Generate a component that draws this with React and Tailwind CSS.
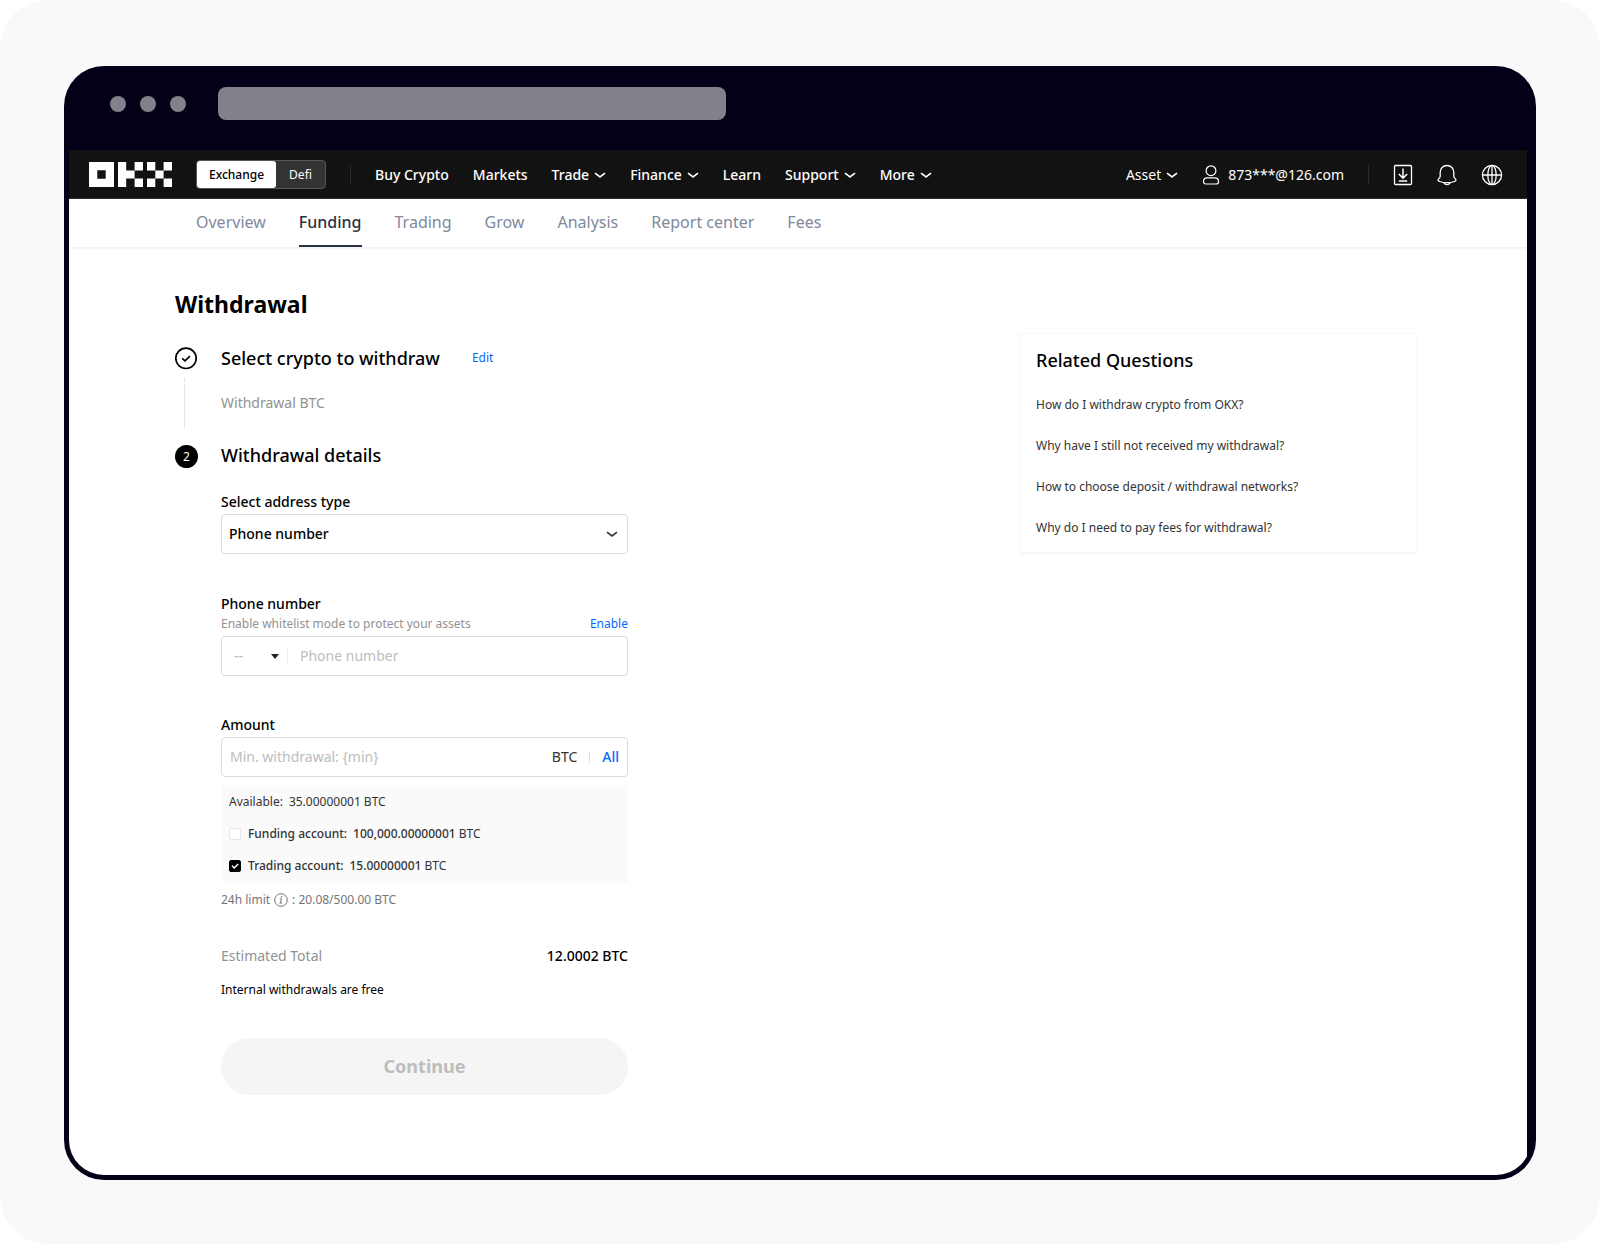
import { useState } from "react";

const navLinks = [
  { label: "Buy Crypto" },
  { label: "Markets" },
  { label: "Trade", menu: true },
  { label: "Finance", menu: true },
  { label: "Learn" },
  { label: "Support", menu: true },
  { label: "More", menu: true },
];

const tabs = ["Overview", "Funding", "Trading", "Grow", "Analysis", "Report center", "Fees"];

const questions = [
  "How do I withdraw crypto from OKX?",
  "Why have I still not received my withdrawal?",
  "How to choose deposit / withdrawal networks?",
  "Why do I need to pay fees for withdrawal?",
];

function Logo() {
  return (
    <svg width="83" height="25" viewBox="0 0 83 25" fill="white">
      <path fillRule="evenodd" d="M0 0h25v25H0zM8.3 8.3v8.4h8.4V8.3z" />
      <path d="M29 0h8.2v8.4h8.4v8.2h-8.4V25H29zM45.6 0H54v8.4h-8.4zM45.6 16.6H54V25h-8.4z" />
      <path d="M58 0h8.3v8.4H58zM74.6 0H83v8.4h-8.4zM66.3 8.4h8.3v8.2h-8.3zM58 16.6h8.3V25H58zM74.6 16.6H83V25h-8.4z" />
    </svg>
  );
}

function Chevron({ className }) {
  return (
    <svg className={className} width="12" height="8" viewBox="0 0 12 8" fill="none" stroke="currentColor" strokeWidth="1.6">
      <path d="M1 2.2 6 6l5-3.8" />
    </svg>
  );
}

function UserIcon() {
  return (
    <svg width="18" height="20" viewBox="0 0 18 20" fill="none" stroke="currentColor" strokeWidth="1.2">
      <circle cx="9" cy="5.7" r="4.9" />
      <path d="M5 12.8h8a3.4 3.4 0 0 1 3.5 3.400v.5c0 1.400-1 2.300-2.300 2.300H3.800c-1.300 0-2.300-.9-2.300-2.300v-.5A3.400 3.400 0 0 1 5 12.800z" />
    </svg>
  );
}

function DownloadIcon() {
  return (
    <svg width="20" height="22" viewBox="0 0 20 22" fill="none" stroke="currentColor" strokeWidth="1.3">
      <rect x="1.5" y="1.5" width="17" height="19" rx="1" />
      <path d="M10 4.500v9.500M5.800 10l4.200 4.100 4.200-4.100M5.800 16.900h8.400" strokeWidth="1.5" />
    </svg>
  );
}

function BellIcon() {
  return (
    <svg width="20" height="22" viewBox="0 0 20 22" fill="none" stroke="currentColor" strokeWidth="1.3" strokeLinejoin="round">
      <path d="M10 1.500c-4 0-6.800 2.900-6.800 6.700v4.100c0 1.600-2.200 2.600-2.200 4 0 .7.700.9 1.600 1.200 4.600 1.500 10.200 1.500 14.800 0 .9-.3 1.600-.5 1.600-1.200 0-1.400-2.200-2.400-2.200-4V8.200c0-3.800-2.800-6.700-6.800-6.700z" />
      <path d="M6.800 18.600c.7 1.400 1.900 2 3.200 2s2.500-.6 3.200-2" />
    </svg>
  );
}

function GlobeIcon() {
  return (
    <svg width="22" height="22" viewBox="0 0 22 22" fill="none" stroke="currentColor" strokeWidth="1.3">
      <circle cx="11" cy="11" r="9.6" />
      <ellipse cx="11" cy="11" rx="4.200" ry="9.6" />
      <path d="M1.400 11h19.200M11 1.400v19.200" />
    </svg>
  );
}

function InfoIcon() {
  return (
    <svg width="14" height="14" viewBox="0 0 14 14" fill="none" stroke="currentColor">
      <circle cx="7" cy="7" r="6.3" />
      <path d="M5.800 5.800h1.500L6.500 10h1.700M5.400 10h1.400" />
      <circle cx="7.6" cy="3.7" r=".8" fill="currentColor" stroke="none" />
    </svg>
  );
}

function AccountRow({ label, amount, checked, onChange }) {
  return (
    <label className="flex items-center h-8 text-xs">
      <span className="relative flex w-3 h-3 mr-[7px]">
        <input
          type="checkbox"
          checked={checked}
          onChange={onChange}
          className="peer appearance-none w-3 h-3 rounded-xs border border-[#e6e6e6] bg-white checked:bg-black checked:border-black"
        />
        <svg className="absolute inset-0 hidden peer-checked:block pointer-events-none" width="12" height="12" viewBox="0 0 12 12" fill="none" stroke="white" strokeWidth="1.5">
          <path d="M3 5.800 5.200 8l4-4" />
        </svg>
      </span>
      <span className="font-medium mr-1.5">{label}:</span>
      <span>
        <span className="font-medium">{amount}</span> BTC
      </span>
    </label>
  );
}

function Header() {
  return (
    <header className="flex items-center h-[49px] pl-5 pr-6 pt-px bg-[#121212] border-b border-[#2e2e2e] text-white text-sm">
      <a href="#" aria-label="OKX">
        <Logo />
      </a>
      <div className="flex ml-6 h-[29px] w-[130px] rounded border border-[#555] bg-[#333] text-xs">
        <button className="w-[79px] rounded-[3px] bg-white text-black font-medium">Exchange</button>
        <button className="flex-1">Defi</button>
      </div>
      <div className="w-px h-5 mx-6 bg-[#2a2a2a]" />
      <nav className="flex items-center gap-6 font-medium">
        {navLinks.map((item) => (
          <a key={item.label} href="#" className="flex items-center gap-[5px]">
            {item.label}
            {item.menu && <Chevron />}
          </a>
        ))}
      </nav>
      <div className="flex items-center ml-auto">
        <a href="#" className="flex items-center gap-[5px]">
          Asset
          <Chevron />
        </a>
        <a href="#" className="flex items-center gap-2 ml-6">
          <UserIcon />
          873***@126.com
        </a>
        <div className="w-px h-5 mx-6 bg-[#2a2a2a]" />
        <div className="flex items-center gap-6">
          <button aria-label="Download"><DownloadIcon /></button>
          <button aria-label="Notifications"><BellIcon /></button>
          <button aria-label="Language"><GlobeIcon /></button>
        </div>
      </div>
    </header>
  );
}

function WithdrawForm() {
  const [addressType, setAddressType] = useState("phone");
  const [phone, setPhone] = useState("");
  const [amount, setAmount] = useState("");
  const [funding, setFunding] = useState(false);
  const [trading, setTrading] = useState(true);

  return (
    <form className="flex flex-col text-sm">
      <label htmlFor="addressType" className="mt-[25px] leading-5 font-medium">Select address type</label>
      <div className="relative mt-0.5">
        <select
          id="addressType"
          value={addressType}
          onChange={(e) => setAddressType(e.target.value)}
          className="appearance-none w-full h-10 px-[7px] rounded border border-[#dcdcdc] bg-white font-medium"
        >
          <option value="phone">Phone number</option>
          <option value="email">Email</option>
        </select>
        <Chevron className="absolute right-[10px] top-4 text-[#333] pointer-events-none" />
      </div>

      <label htmlFor="phone" className="mt-10 leading-5 font-medium">Phone number</label>
      <div className="flex justify-between mt-0.5 text-xs">
        <span className="text-[#929292]">Enable whitelist mode to protect your assets</span>
        <a href="#" className="text-[#0569ff]">Enable</a>
      </div>
      <div className="flex items-center mt-1 h-10 rounded border border-[#dcdcdc]">
        <div className="relative flex items-center w-[66px] h-4 border-r border-[#ebebeb]">
          <select aria-label="Country code" className="appearance-none w-full pl-3 font-medium text-[#bdbdbd]">
            <option>--</option>
          </select>
          <svg className="absolute right-2 pointer-events-none" width="8" height="5" viewBox="0 0 8 5" fill="#222">
            <path d="M0 0h8L4 5z" />
          </svg>
        </div>
        <input
          id="phone"
          type="tel"
          placeholder="Phone number"
          value={phone}
          onChange={(e) => setPhone(e.target.value)}
          className="flex-1 min-w-0 px-3 outline-none placeholder:text-[#bdbdbd]"
        />
      </div>

      <label htmlFor="amount" className="mt-[39px] leading-5 font-medium">Amount</label>
      <div className="flex items-center mt-0.5 h-10 px-2 rounded border border-[#dcdcdc]">
        <input
          id="amount"
          placeholder="Min. withdrawal: {min}"
          value={amount}
          onChange={(e) => setAmount(e.target.value)}
          className="flex-1 min-w-0 outline-none placeholder:text-[#bdbdbd]"
        />
        <span className="text-[#333]">BTC</span>
        <div className="w-px h-3 mx-3 bg-[#e0e0e0]" />
        <button type="button" className="font-medium text-[#0569ff]">All</button>
      </div>

      <div className="mt-2 px-2 py-px rounded bg-[#fafafa] text-[#333]">
        <div className="flex items-center gap-1.5 h-8 text-xs">
          <span>Available:</span>
          <span>35.00000001 BTC</span>
        </div>
        <AccountRow label="Funding account" amount="100,000.00000001" checked={funding} onChange={() => setFunding(!funding)} />
        <AccountRow label="Trading account" amount="15.00000001" checked={trading} onChange={() => setTrading(!trading)} />
      </div>
      <div className="flex items-center gap-1 mt-[7px] h-5 text-xs text-[#757575]">
        24h limit <InfoIcon /> : 20.08/500.00 BTC
      </div>

      <div className="flex justify-between mt-9 leading-5">
        <span className="text-[#929292]">Estimated Total</span>
        <span className="font-medium">12.0002 BTC</span>
      </div>
      <p className="mt-4 text-xs">Internal withdrawals are free</p>

      <button type="button" disabled className="mt-10 pb-px h-[57px] rounded-full bg-[#f5f5f5] text-lg font-bold text-[#bdbdbd]">
        Continue
      </button>
    </form>
  );
}

export default function App() {
  return (
    <div className="flex flex-col min-h-screen px-16 pt-[66px] pb-16 rounded-[48px] bg-[#f9f9f9] font-['Noto_Sans',sans-serif] text-black">
      <div className="flex flex-col flex-1 p-[5px] pt-0 rounded-[40px] bg-[#050017]">
        {/* browser bar */}
        <div className="flex items-center h-[84px] pl-[41px] pb-[9px]">
          <div className="flex gap-[14px]">
            <span className="w-4 h-4 rounded-full bg-[#848089]" />
            <span className="w-4 h-4 rounded-full bg-[#848089]" />
            <span className="w-4 h-4 rounded-full bg-[#848089]" />
          </div>
          <div className="w-[508px] h-[33px] ml-8 rounded-lg bg-[#848089]" />
        </div>

        <div className="flex flex-col flex-1 pr-1 rounded-b-[35px] overflow-hidden">
          <Header />
          <div className="flex flex-col flex-1 bg-white">
            <nav className="flex gap-[33px] h-[49px] pl-[127px] border-b border-[#f4f4f4] shadow-xs shadow-black/5">
              {tabs.map((tab) => (
                <a
                  key={tab}
                  href="#"
                  className={
                    tab === "Funding"
                      ? "pt-[11px] border-b-2 border-[#2a3142] text-[#2a3142] font-medium"
                      : "pt-[11px] text-[#81899b]"
                  }
                >
                  {tab}
                </a>
              ))}
            </nav>

            <main className="flex justify-between items-start pl-[106px] pr-[110px] pt-10 pb-12">
              <div className="w-[453px]">
                <h1 className="text-[23px] leading-8 font-bold">Withdrawal</h1>

                <section className="flex mt-[26px]">
                  <div className="flex flex-col w-[23px] mr-[23px]">
                    <svg width="23" height="24" viewBox="0 0 23 24" fill="none" stroke="black">
                      <circle cx="11" cy="12.300" r="10.200" strokeWidth="1.7" />
                      <path d="m7.200 12.300 2.800 2.600 4.900-4.700" strokeWidth="1.7" />
                    </svg>
                    <div className="flex-1 w-0 ml-[9px] mt-2 mb-4 border-l border-dotted border-[#ccc]" />
                  </div>
                  <div className="flex-1 pb-[30px]">
                    <div className="flex items-center h-6">
                      <h2 className="text-lg font-medium leading-6">Select crypto to withdraw</h2>
                      <a href="#" className="ml-8 text-xs text-[#0569ff]">Edit</a>
                    </div>
                    <p className="mt-[23px] text-sm text-[#929292]">Withdrawal BTC</p>
                  </div>
                </section>

                <section className="flex">
                  <div className="w-[23px] h-[23px] mr-[23px] mt-0.5 rounded-full bg-black text-white text-xs leading-[23px] text-center">2</div>
                  <div className="flex-1">
                    <h2 className="text-lg font-medium leading-6">Withdrawal details</h2>
                    <WithdrawForm />
                  </div>
                </section>
              </div>

              <aside className="w-[397px] mt-[45px] px-[15px] pt-[14px] pb-1 border border-[#f7f7f7] shadow-xs shadow-black/5">
                <h2 className="text-lg font-medium leading-6">Related Questions</h2>
                <ul className="mt-3 text-xs text-[#333]">
                  {questions.map((q) => (
                    <li key={q} className="flex items-center h-[41px]">
                      <a href="#">{q}</a>
                    </li>
                  ))}
                </ul>
              </aside>
            </main>
          </div>
        </div>
      </div>
    </div>
  );
}
